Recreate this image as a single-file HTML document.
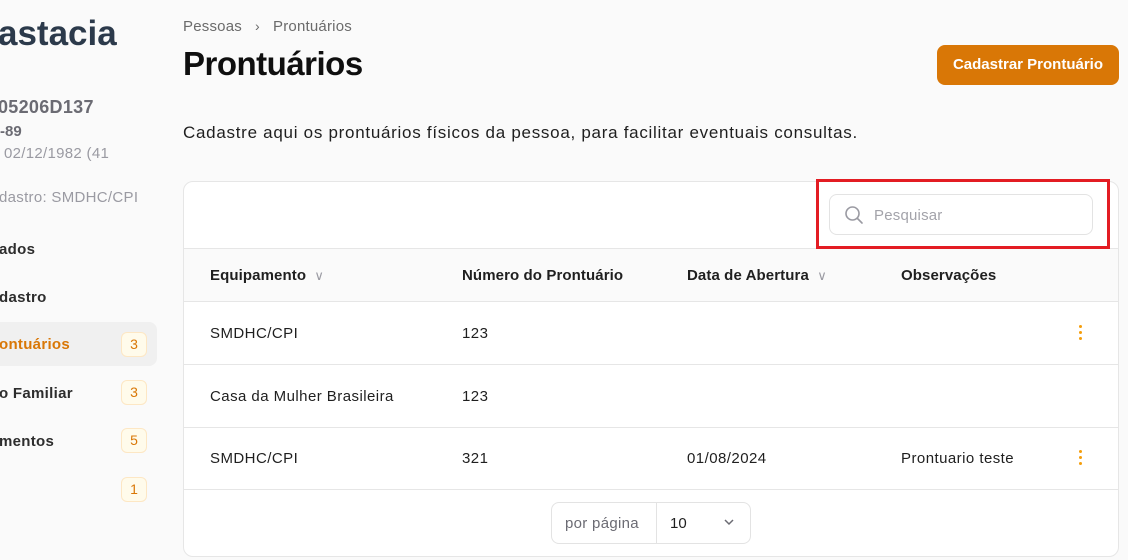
<!DOCTYPE html>
<html><head><meta charset="utf-8"><style>
*{margin:0;padding:0;box-sizing:border-box}
body{width:1128px;height:560px;overflow:hidden;background:#fafafa;font-family:"Liberation Sans",sans-serif;position:relative;color:#1a1a1a}
.a{position:absolute;white-space:nowrap}
.badge{position:absolute;left:121px;width:26px;height:25px;border:1px solid #fde7c4;background:#fffbeb;border-radius:6px;color:#d97706;font-size:14px;text-align:center;line-height:23px}
.nav{font-size:15px;font-weight:bold;color:#2d2d2d;letter-spacing:0.3px}
.td{font-size:15px;color:#1f1f1f;letter-spacing:0.45px}
.th{font-size:15px;font-weight:bold;color:#1f1f1f;letter-spacing:0.1px}
.line{position:absolute;left:183px;width:936px;height:1px;background:#e6e6e6}
.dots{position:absolute;width:4px}
.dots i{display:block;width:3px;height:3px;border-radius:50%;background:#f59e0b;margin-bottom:3px}
</style></head><body>
<div class="a" style="left:-2px;top:14px;font-size:35px;font-weight:bold;color:#2c3a4b">astacia</div>
<div class="a" style="left:-2px;top:97px;font-size:18px;font-weight:bold;color:#6b6b73;letter-spacing:0.3px">05206D137</div>
<div class="a" style="left:0;top:123px;font-size:15px;font-weight:bold;color:#6b6b73">-89</div>
<div class="a" style="left:4px;top:145px;font-size:15px;color:#9a9aa2;letter-spacing:0.3px">02/12/1982 (41</div>
<div class="a" style="left:-1px;top:189px;font-size:15px;color:#9a9aa2;letter-spacing:0.3px">dastro: SMDHC/CPI</div>
<div class="a nav" style="left:-1px;top:241px">ados</div>
<div class="a nav" style="left:-1px;top:289px">dastro</div>
<div class="a" style="left:-20px;top:322px;width:177px;height:44px;background:#f0f0f0;border-radius:8px"></div>
<div class="a nav" style="left:-1px;top:336px;color:#d97706">ontuários</div>
<div class="badge" style="top:332px">3</div>
<div class="a nav" style="left:-1px;top:385px">o Familiar</div>
<div class="badge" style="top:380px">3</div>
<div class="a nav" style="left:-1px;top:433px">mentos</div>
<div class="badge" style="top:428px">5</div>
<div class="badge" style="top:477px">1</div>

<div class="a" style="left:183px;top:18px;font-size:15px;color:#6b6b6b;letter-spacing:0.2px">Pessoas &nbsp;&nbsp;<span style="font-size:14px">&#8250;</span>&nbsp;&nbsp; Prontuários</div>
<div class="a" style="left:183px;top:45px;font-size:33px;font-weight:bold;color:#0f0f0f;letter-spacing:-0.5px">Prontuários</div>
<div class="a" style="left:937px;top:45px;width:182px;height:40px;background:#d97706;border-radius:8px;color:#fff;font-size:15px;font-weight:bold;text-align:center;line-height:40px">Cadastrar Prontuário</div>
<div class="a" style="left:183px;top:123px;font-size:17px;color:#1f1f1f;letter-spacing:0.72px">Cadastre aqui os prontuários físicos da pessoa, para facilitar eventuais consultas.</div>

<div class="a" style="left:183px;top:181px;width:936px;height:376px;background:#fff;border:1px solid #e6e6e6;border-radius:10px;overflow:hidden">
 <div class="a" style="left:0;top:67px;width:936px;height:53px;background:#fafafa"></div>
</div>
<div class="line" style="top:248px"></div>
<div class="line" style="top:301px"></div>
<div class="line" style="top:364px"></div>
<div class="line" style="top:427px"></div>
<div class="line" style="top:489px"></div>

<div class="a" style="left:829px;top:194px;width:264px;height:41px;border:1px solid #e3e3e3;border-radius:8px;background:#fff"></div>
<svg class="a" style="left:844px;top:205px" width="20" height="20" viewBox="0 0 20 20"><circle cx="8.5" cy="8.5" r="6.5" fill="none" stroke="#9a9aa2" stroke-width="1.6"/><path d="M13.5 13.5L18 18" stroke="#9a9aa2" stroke-width="1.6" stroke-linecap="round"/></svg>
<div class="a" style="left:874px;top:207px;font-size:15px;color:#a3a3aa;letter-spacing:0.2px">Pesquisar</div>
<div class="a" style="left:816px;top:179px;width:294px;height:70px;border:3px solid #e31c23"></div>

<div class="a th" style="left:210px;top:267px">Equipamento <span style="color:#9a9aa2;font-weight:normal;font-size:13px;margin-left:4px">&#8744;</span></div>
<div class="a th" style="left:462px;top:267px">Número do Prontuário</div>
<div class="a th" style="left:687px;top:267px">Data de Abertura <span style="color:#9a9aa2;font-weight:normal;font-size:13px;margin-left:4px">&#8744;</span></div>
<div class="a th" style="left:901px;top:267px">Observações</div>

<div class="a td" style="left:210px;top:325px">SMDHC/CPI</div>
<div class="a td" style="left:462px;top:325px">123</div>
<div class="dots" style="left:1079px;top:325px"><i></i><i></i><i></i></div>
<div class="a td" style="left:210px;top:388px">Casa da Mulher Brasileira</div>
<div class="a td" style="left:462px;top:388px">123</div>
<div class="a td" style="left:210px;top:450px">SMDHC/CPI</div>
<div class="a td" style="left:462px;top:450px">321</div>
<div class="a td" style="left:687px;top:450px">01/08/2024</div>
<div class="a td" style="left:901px;top:450px">Prontuario teste</div>
<div class="dots" style="left:1079px;top:450px"><i></i><i></i><i></i></div>

<div class="a" style="left:551px;top:502px;width:200px;height:42px;border:1px solid #e3e3e3;border-radius:8px;background:#fff"></div>
<div class="a" style="left:656px;top:503px;width:1px;height:40px;background:#e3e3e3"></div>
<div class="a" style="left:565px;top:515px;font-size:15px;color:#6b6b73;letter-spacing:0.3px">por página</div>
<div class="a" style="left:670px;top:515px;font-size:15px;color:#1f1f1f">10</div>
<svg class="a" style="left:723px;top:517px" width="12" height="10" viewBox="0 0 12 10"><path d="M2 3l4 4 4-4" fill="none" stroke="#6b6b73" stroke-width="1.5"/></svg>
</body></html>
